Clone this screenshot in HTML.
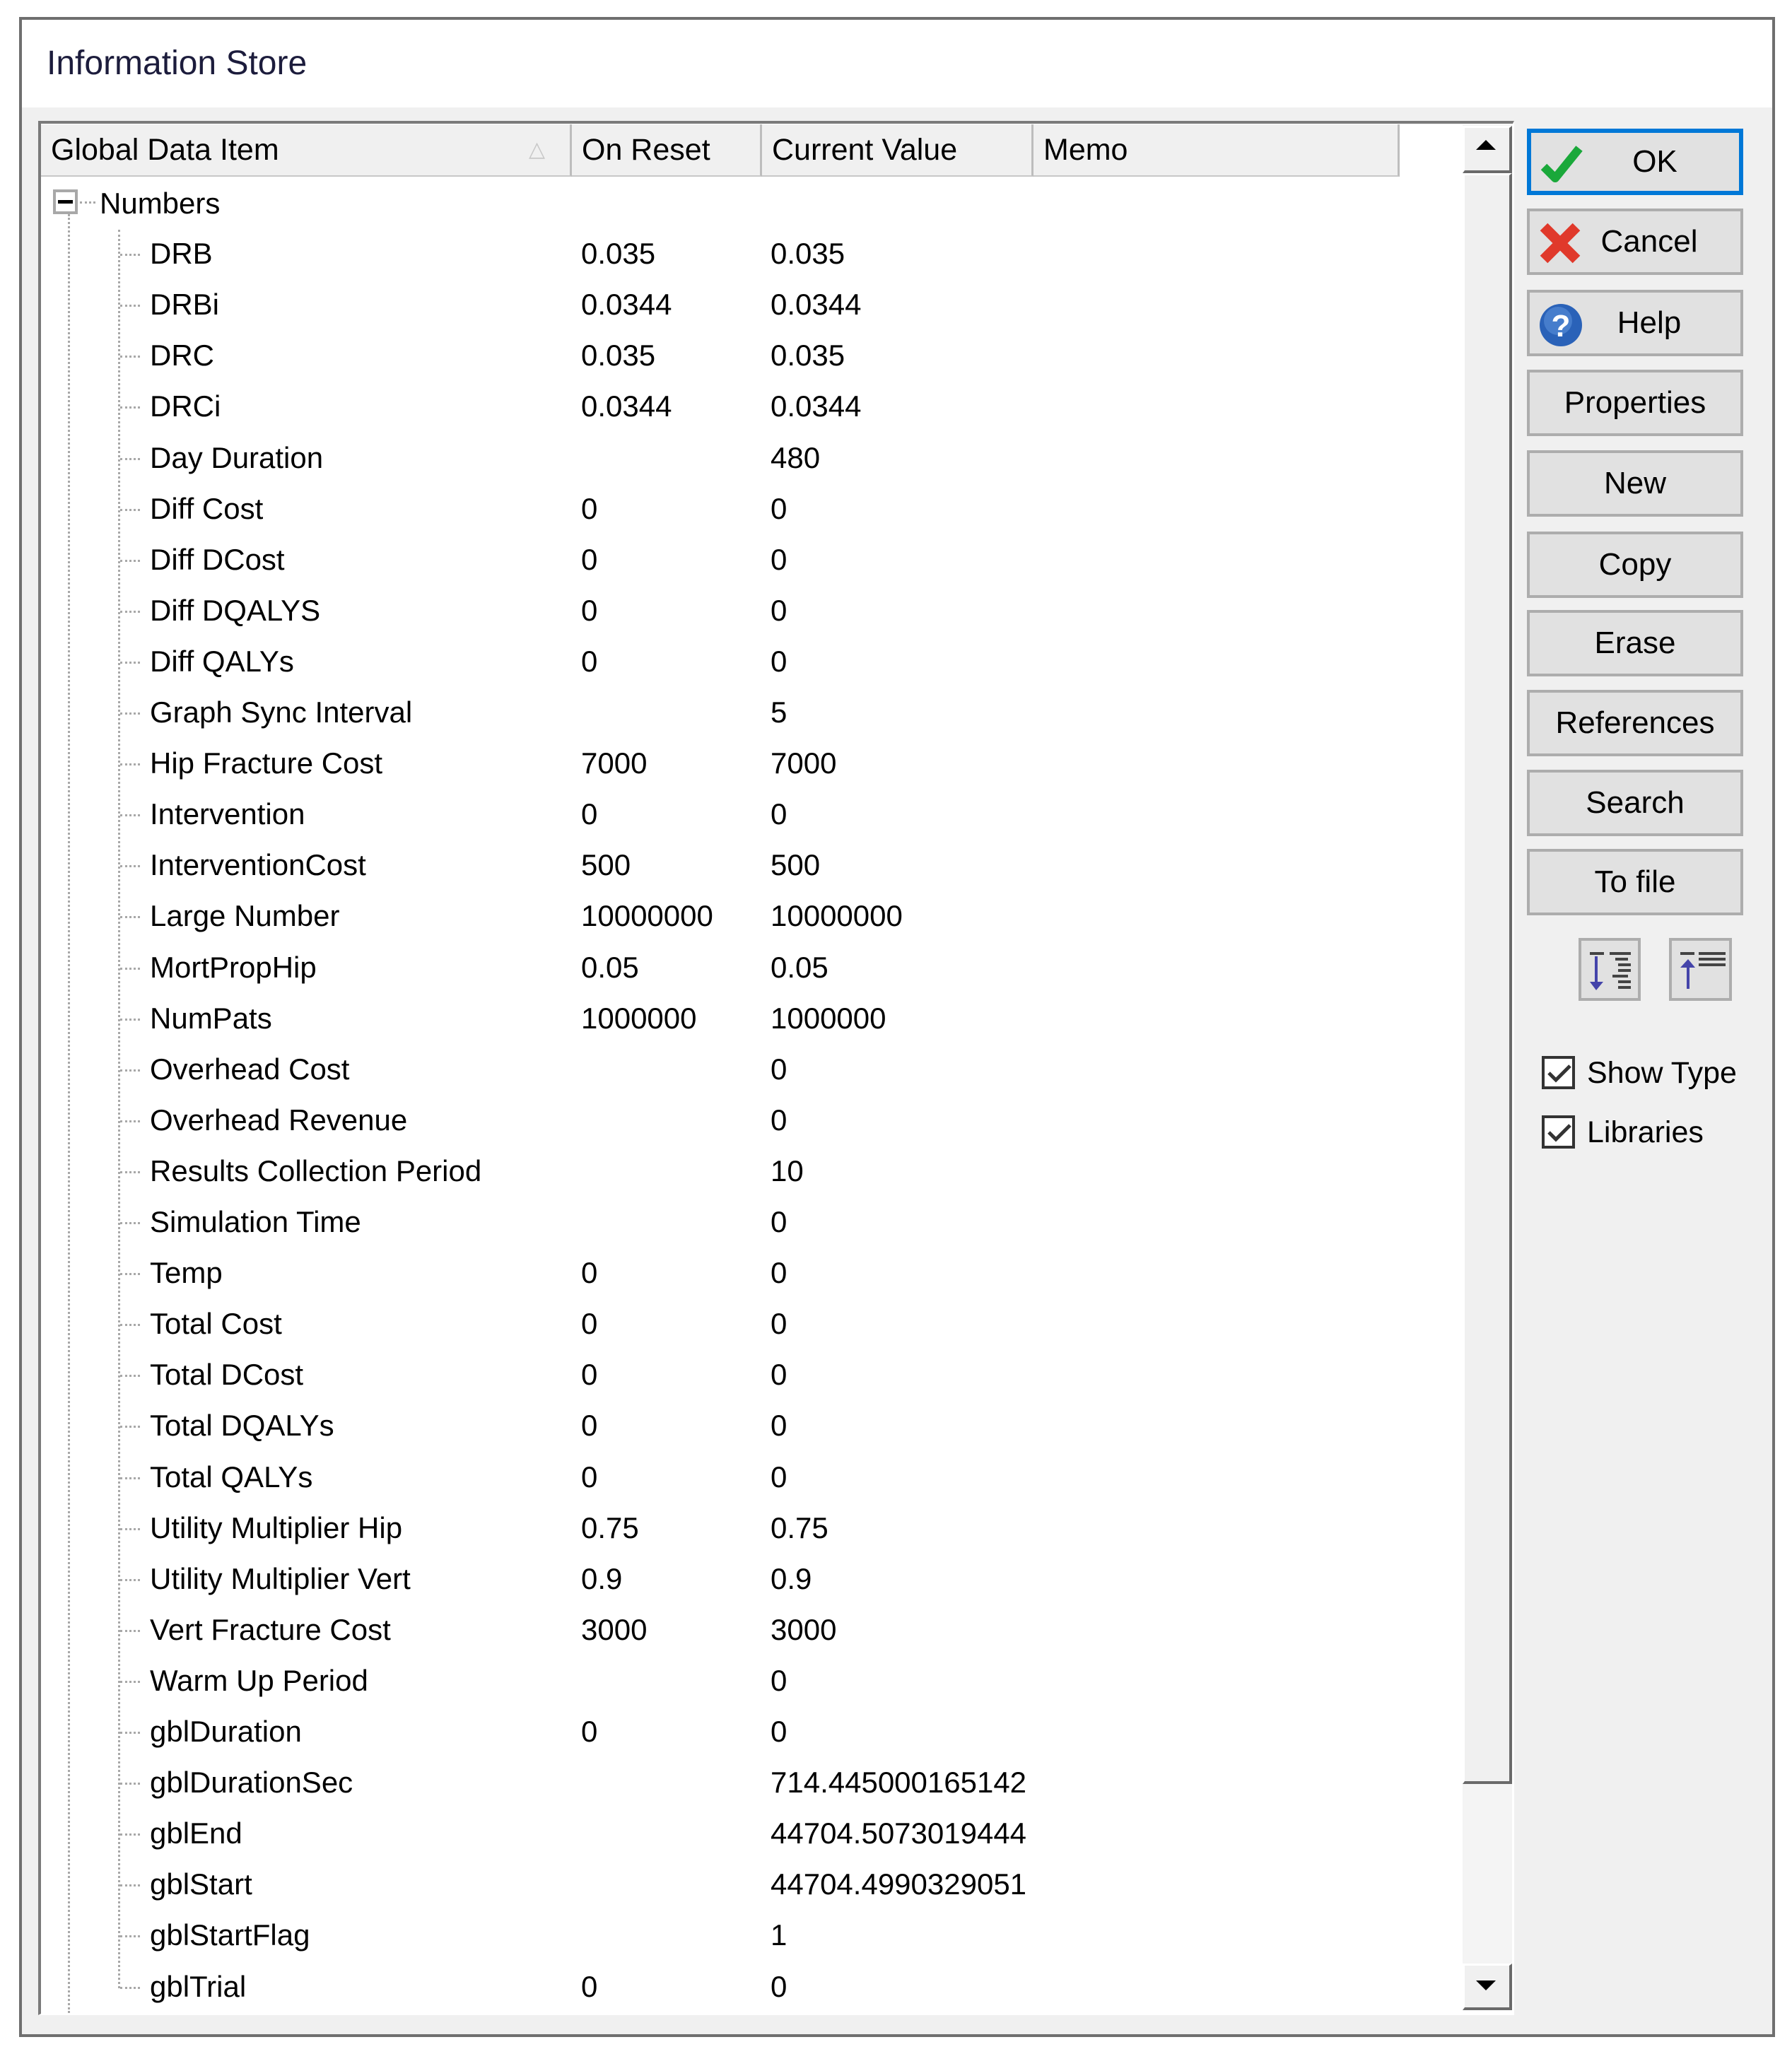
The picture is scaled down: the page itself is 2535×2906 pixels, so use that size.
<!DOCTYPE html>
<html><head><meta charset="utf-8"><style>
*{margin:0;padding:0;box-sizing:border-box}
body{width:2535px;height:2906px;background:#fff;position:relative;overflow:hidden;font-family:"Liberation Sans",sans-serif;color:#000}
.a{position:absolute}
.win{left:27px;top:24px;width:2484px;height:2858px;border:4px solid #6f6f6f;background:#f0f0f0}
.title{left:0;top:0;width:2476px;height:124px;background:#fff}
.tt{left:35px;top:36px;font-size:48px;color:#1c1c3c;line-height:52px}
.panel{left:54px;top:171px;width:2088px;height:2680px;border-top:4px solid #7a7a7a;border-left:4px solid #7a7a7a;border-right:2px solid #fff;border-bottom:2px solid #fff;background:#fff}
.hdr{top:176px;height:74px;background:#f0f0f0;border-bottom:2px solid #c8c8c8;font-size:43px;line-height:72px;padding-left:14px;border-right:3px solid #bdbdbd}
.row{height:72px;line-height:72px;font-size:42px;white-space:nowrap}
.btn{left:2160px;width:306px;height:94px;background:#e1e1e1;border:4px solid #adadad;font-size:44px;line-height:86px;text-align:center}
.ico{position:absolute;left:12px;top:14px}
.cb{width:47px;height:47px;border:4px solid #333;background:#fff}
</style></head><body>
<div class="a win">
<div class="a title"><div class="a tt">Information Store</div></div>
</div>
<div class="a panel"></div>
<div class="a hdr" style="left:58px;width:751px">Global Data Item<span style="position:absolute;left:690px;top:0;color:#c8c8c8;font-size:30px">&#9651;</span></div>
<div class="a hdr" style="left:809px;width:269px">On Reset</div>
<div class="a hdr" style="left:1078px;width:384px">Current Value</div>
<div class="a hdr" style="left:1462px;width:518px">Memo</div>
<div class="a" style="left:2069px;top:176px;width:70px;height:2668px;background:#f4f4f4"></div>
<div class="a" style="left:2069px;top:178px;width:70px;height:67px;background:#f0f0f0;border-top:3px solid #fff;border-left:3px solid #fff;border-right:4px solid #6a6a6a;border-bottom:4px solid #6a6a6a"></div>
<div class="a" style="left:2088px;top:198px;width:0;height:0;border-left:14px solid transparent;border-right:14px solid transparent;border-bottom:14px solid #000"></div>
<div class="a" style="left:2069px;top:245px;width:70px;height:2279px;background:#f0f0f0;border-top:3px solid #fff;border-left:3px solid #fff;border-right:4px solid #6a6a6a;border-bottom:4px solid #6a6a6a"></div>
<div class="a" style="left:2069px;top:2778px;width:70px;height:66px;background:#f0f0f0;border-top:3px solid #fff;border-left:3px solid #fff;border-right:4px solid #6a6a6a;border-bottom:4px solid #6a6a6a"></div>
<div class="a" style="left:2088px;top:2802px;width:0;height:0;border-left:14px solid transparent;border-right:14px solid transparent;border-top:14px solid #000"></div>
<div class="a" style="left:75px;top:268px;width:35px;height:35px;border:4px solid #a8a8a8;background:#fff"></div>
<div class="a" style="left:82px;top:283px;width:21px;height:5px;background:#000"></div>
<div class="a" style="left:113px;top:285px;width:22px;border-top:3px dotted #a8a8a8"></div>
<div class="a" style="left:96px;top:303px;height:2545px;border-left:3px dotted #a8a8a8"></div>
<div class="a" style="left:167px;top:325px;height:2488px;border-left:3px dotted #a8a8a8"></div>
<div class="a row" style="left:141px;top:252px">Numbers</div>
<div id="rows"></div>
<script>
var d=[["DRB","0.035","0.035"],["DRBi","0.0344","0.0344"],["DRC","0.035","0.035"],["DRCi","0.0344","0.0344"],["Day Duration","","480"],["Diff Cost","0","0"],["Diff DCost","0","0"],["Diff DQALYS","0","0"],["Diff QALYs","0","0"],["Graph Sync Interval","","5"],["Hip Fracture Cost","7000","7000"],["Intervention","0","0"],["InterventionCost","500","500"],["Large Number","10000000","10000000"],["MortPropHip","0.05","0.05"],["NumPats","1000000","1000000"],["Overhead Cost","","0"],["Overhead Revenue","","0"],["Results Collection Period","","10"],["Simulation Time","","0"],["Temp","0","0"],["Total Cost","0","0"],["Total DCost","0","0"],["Total DQALYs","0","0"],["Total QALYs","0","0"],["Utility Multiplier Hip","0.75","0.75"],["Utility Multiplier Vert","0.9","0.9"],["Vert Fracture Cost","3000","3000"],["Warm Up Period","","0"],["gblDuration","0","0"],["gblDurationSec","","714.445000165142"],["gblEnd","","44704.5073019444"],["gblStart","","44704.4990329051"],["gblStartFlag","","1"],["gblTrial","0","0"]];
var h="";
for(var i=0;i<d.length;i++){var c=288+(i+1)*72.1;var t=c-37;
h+='<div class="a" style="left:170px;top:'+(c-1)+'px;width:28px;border-top:3px dotted #a8a8a8"></div>';
h+='<div class="a row" style="left:212px;top:'+t+'px">'+d[i][0]+'</div>';
h+='<div class="a row" style="left:822px;top:'+t+'px">'+d[i][1]+'</div>';
h+='<div class="a row" style="left:1090px;top:'+t+'px;width:372px;overflow:hidden">'+d[i][2]+'</div>';}
document.getElementById("rows").innerHTML=h;
</script>
<div class="a btn" style="top:182px;border:6px solid #0078d7;line-height:82px"><svg class="ico" width="62" height="62" viewBox="0 0 62 62"><path d="M6 34 L22 50 L56 8" stroke="#1aa83a" stroke-width="12" fill="none" stroke-linejoin="round"/></svg><span style="margin-left:56px">OK</span></div>
<div class="a btn" style="top:295px"><svg class="ico" width="62" height="62" viewBox="0 0 62 62"><path d="M8 8 L54 54 M54 8 L8 54" stroke="#e0392b" stroke-width="15"/></svg><span style="margin-left:40px">Cancel</span></div>
<div class="a btn" style="top:410px"><svg class="ico" width="64" height="64" viewBox="0 0 64 64"><circle cx="32" cy="32" r="30" fill="#2a62b8"/><circle cx="28" cy="26" r="20" fill="#5a90d8" opacity=".6"/><text x="32" y="48" font-size="44" font-weight="bold" fill="#fff" text-anchor="middle" font-family="Liberation Sans">?</text></svg><span style="margin-left:40px">Help</span></div>
<div class="a btn" style="top:523px">Properties</div>
<div class="a btn" style="top:637px">New</div>
<div class="a btn" style="top:752px">Copy</div>
<div class="a btn" style="top:863px">Erase</div>
<div class="a btn" style="top:976px">References</div>
<div class="a btn" style="top:1089px">Search</div>
<div class="a btn" style="top:1201px">To file</div>
<div class="a" style="left:2233px;top:1327px;width:88px;height:89px;background:#e1e1e1;border:4px solid #adadad">
<svg width="80" height="81" viewBox="0 0 80 81"><g fill="#444"><rect x="12" y="16" width="20" height="4"/><rect x="40" y="16" width="30" height="4"/><rect x="48" y="24" width="18" height="4"/><rect x="52" y="32" width="18" height="4"/><rect x="52" y="40" width="18" height="4"/><rect x="44" y="48" width="22" height="4"/><rect x="52" y="56" width="18" height="4"/><rect x="52" y="64" width="18" height="4"/></g><path d="M21 22 V66" stroke="#4444aa" stroke-width="4"/><path d="M12 58 H31 L21 70Z" fill="#4444aa"/></svg></div>
<div class="a" style="left:2361px;top:1327px;width:89px;height:89px;background:#e1e1e1;border:4px solid #adadad">
<svg width="81" height="81" viewBox="0 0 81 81"><g fill="#444"><rect x="12" y="16" width="20" height="4"/><rect x="38" y="16" width="38" height="4"/><rect x="38" y="24" width="38" height="4"/><rect x="38" y="32" width="38" height="4"/></g><path d="M23 30 V68" stroke="#4444aa" stroke-width="4"/><path d="M12 38 H33 L23 26Z" fill="#4444aa"/></svg></div>
<div class="a cb" style="left:2181px;top:1494px"><svg width="40" height="40" viewBox="0 0 40 40"><path d="M6 20 L16 30 L36 10" stroke="#333" stroke-width="5" fill="none"/></svg></div>
<div class="a row" style="left:2245px;top:1482px;font-size:43px">Show Type</div>
<div class="a cb" style="left:2181px;top:1578px"><svg width="40" height="40" viewBox="0 0 40 40"><path d="M6 20 L16 30 L36 10" stroke="#333" stroke-width="5" fill="none"/></svg></div>
<div class="a row" style="left:2245px;top:1566px;font-size:43px">Libraries</div>
</body></html>
